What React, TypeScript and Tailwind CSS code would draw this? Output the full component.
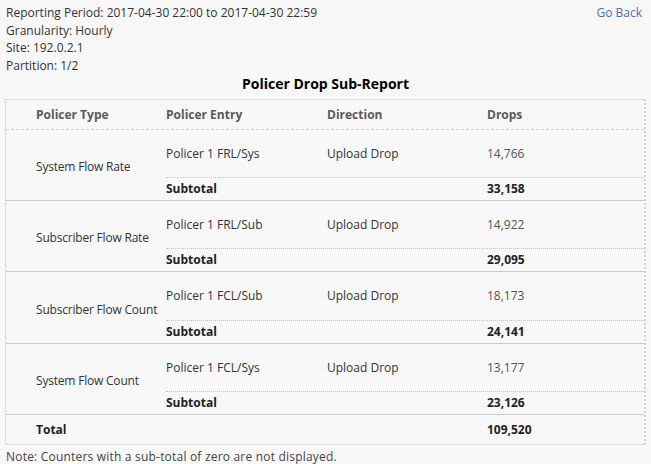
import React from 'react'

type Group = {
  type: string
  entry: string
  direction: string
  drops: string
  subtotal: string
}

const groups: Group[] = [
  { type: 'System Flow Rate', entry: 'Policer 1 FRL/Sys', direction: 'Upload Drop', drops: '14,766', subtotal: '33,158' },
  { type: 'Subscriber Flow Rate', entry: 'Policer 1 FRL/Sub', direction: 'Upload Drop', drops: '14,922', subtotal: '29,095' },
  { type: 'Subscriber Flow Count', entry: 'Policer 1 FCL/Sub', direction: 'Upload Drop', drops: '18,173', subtotal: '24,141' },
  { type: 'System Flow Count', entry: 'Policer 1 FCL/Sys', direction: 'Upload Drop', drops: '13,177', subtotal: '23,126' },
]

export default function App() {
  return (
    <div className="h-[464px] w-[651px] overflow-hidden bg-[#f8f8f8] text-[12px] text-[#333] font-['Open_Sans',sans-serif]">
      {/* report info + go back link */}
      <div className="flex justify-between pl-[6px] pr-[9px] pt-[4px]">
        <div className="leading-[17.5px]">
          <div>Reporting Period: 2017-04-30 22:00 to 2017-04-30 22:59</div>
          <div>Granularity: Hourly</div>
          <div>Site: 192.0.2.1</div>
          <div>Partition: 1/2</div>
        </div>
        <a href="#" className="text-[#4b6ea8] leading-[17.5px]">Go Back</a>
      </div>

      <h1 className="text-center text-[14px] font-bold text-black leading-[20px] mt-0">Policer Drop Sub-Report</h1>

      <div className="mx-[5px] mt-[5px] border border-dotted border-[#c8c8c8] border-r-2 border-r-[#d4d4d4]">
        {/* header row */}
        <div className="flex h-[30px] items-center pl-[30px] font-bold text-[#5a5a5a] border-b border-dashed border-[#d0d0d0]">
          <div className="w-[130px]">Policer Type</div>
          <div className="w-[161px]">Policer Entry</div>
          <div className="w-[160px]">Direction</div>
          <div className="flex-1">Drops</div>
        </div>

        {groups.map((g, i) => (
          <div key={g.type} className="flex pl-[30px] border-b border-[#cccccc]">
            <div className="w-[130px] flex items-center pt-[4px] tracking-[-0.2px]">{g.type}</div>
            <div className="flex-1">
              {/* rows aren't all the same height in the report */}
              <div className={(i === 2 ? 'h-[49px]' : 'h-[48px]') + ' flex items-center border-b border-dotted border-[#c4c4c4]'}>
                <div className="w-[161px]">{g.entry}</div>
                <div className="w-[160px]">{g.direction}</div>
                <div className="flex-1 text-[#555]">{g.drops}</div>
              </div>
              <div className="flex h-[22px] items-center font-bold text-[#222]">
                <div className="w-[321px]">Subtotal</div>
                <div className="flex-1">{g.subtotal}</div>
              </div>
            </div>
          </div>
        ))}

        {/* total row */}
        <div className="flex h-[29px] items-center pl-[30px] font-bold text-[#222]">
          <div className="w-[451px]">Total</div>
          <div className="flex-1">109,520</div>
        </div>
      </div>

      <p className="pl-[6px] pt-[4px] text-[#444] leading-[16px] tracking-[0.2px]">Note: Counters with a sub-total of zero are not displayed.</p>
    </div>
  )
}
